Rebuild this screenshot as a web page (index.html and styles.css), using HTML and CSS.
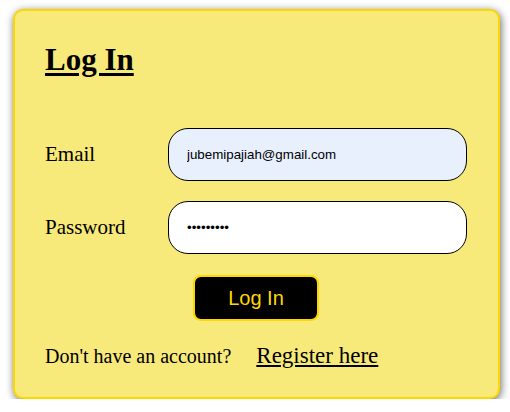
FILE: index.html
```html
<!DOCTYPE html>
<html>
<head>
<meta charset="utf-8">
<link rel="stylesheet" href="styles.css">
</head>
<body>
<div class="card">
  <h1 class="title">Log In</h1>
  <form class="form">
    <div class="row">
      <label class="label" for="email">Email</label>
      <input class="field field-email" id="email" type="email" value="jubemipajiah@gmail.com">
    </div>
    <div class="row">
      <label class="label" for="pw">Password</label>
      <input class="field" id="pw" type="password" value="123456789">
    </div>
    <div class="actions">
      <button class="btn" type="button">Log In</button>
    </div>
  </form>
  <div class="footer">
    <span class="note">Don't have an account?</span>
    <a class="link" href="#">Register here</a>
  </div>
</div>
</body>
</html>
```
FILE: styles.css
```css
html, body {
  margin: 0;
  padding: 0;
  background: #ffffff;
}
body {
  font-family: "Liberation Serif", serif;
  color: #000;
}
.card {
  box-sizing: border-box;
  width: 487px;
  height: 390px;
  margin: 9px 0 0 13px;
  padding: 31px 31px 0 30px;
  background: #f8ea7a;
  border: 2px solid #ffd700;
  border-radius: 10px;
  box-shadow: 1px 2px 9px rgba(0, 0, 0, 0.6);
}
.title {
  margin: 0;
  font-size: 31px;
  line-height: 36px;
  font-weight: bold;
  text-decoration: underline;
  text-decoration-thickness: 3px;
  text-underline-offset: 3px;
}
.form {
  margin-top: 50px;
  display: flex;
  flex-direction: column;
  gap: 20px;
}
.row {
  display: grid;
  grid-template-columns: 123px 1fr;
  align-items: center;
}
.label {
  font-size: 21px;
}
.field {
  box-sizing: border-box;
  height: 53px;
  width: 100%;
  padding: 0 18px;
  border: 1px solid #000;
  border-radius: 20px;
  background: #ffffff;
  font-family: "Liberation Sans", Arial, sans-serif;
  font-size: 13.333px;
  color: #000;
  outline: none;
}
.field-email {
  background: #e8f0fe;
}
.actions {
  display: flex;
  justify-content: center;
  margin-top: 1px;
}
.btn {
  box-sizing: border-box;
  width: 126px;
  height: 46px;
  background: #000;
  border: 2px solid #ffd700;
  border-radius: 8px;
  color: #ffd700;
  font-family: "Liberation Sans", Arial, sans-serif;
  font-size: 20px;
  padding: 0;
}
.footer {
  display: flex;
  align-items: baseline;
  gap: 25px;
  margin-top: 22px;
  line-height: 26px;
}
.note {
  font-size: 20px;
}
.link {
  font-size: 23px;
  color: #000;
  text-decoration: underline;
}
```
